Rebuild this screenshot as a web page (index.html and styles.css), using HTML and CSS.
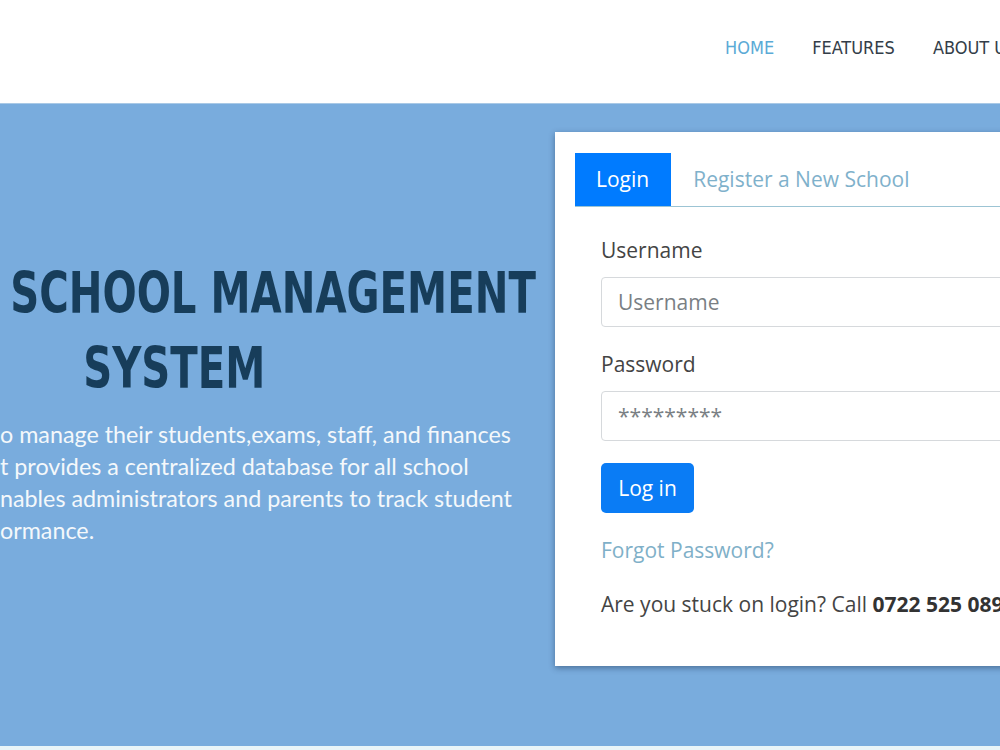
FILE: index.html
```html
<!DOCTYPE html>
<html lang="en">
<head>
<meta charset="utf-8">
<title>School Management System</title>
<link rel="stylesheet" href="styles.css">
</head>
<body>
<header class="topbar">
  <nav class="nav">
    <a class="nav-link active" href="#">HOME</a>
    <a class="nav-link" href="#">FEATURES</a>
    <a class="nav-link" href="#">ABOUT US</a>
  </nav>
</header>
<section class="hero">
  <div class="intro">
    <h1 class="title"><span class="t1">SCHOOL MANAGEMENT</span><span class="t2">SYSTEM</span></h1>
    <p class="lead">o manage their students,exams, staff, and finances<br>t provides a centralized database for all school<br>nables administrators and parents to track student<br>ormance.</p>
  </div>
  <div class="card">
    <div class="tabs">
      <a class="tab active" href="#">Login</a>
      <a class="tab" href="#">Register a New School</a>
    </div>
    <form class="form">
      <label class="label" for="u">Username</label>
      <input class="input" id="u" type="text" placeholder="Username">
      <label class="label" for="p">Password</label>
      <input class="input" id="p" type="text" placeholder="*********">
      <button class="btn" type="button">Log in</button>
      <a class="forgot" href="#">Forgot Password?</a>
      <p class="help">Are you stuck on login? Call <b>0722 525 089</b></p>
    </form>
  </div>
</section>
<div class="strip"></div>
</body>
</html>
```
FILE: styles.css
```css
html, body {
  margin: 0;
  padding: 0;
}
body {
  width: 1000px;
  height: 750px;
  overflow: hidden;
  font-family: "Open Sans", "Liberation Sans", sans-serif;
}
.topbar {
  height: 104px;
  background: #fff;
  border-bottom: 1px solid #a9c9e6;
  display: flex;
  align-items: center;
  padding-left: 725px;
  box-sizing: border-box;
}
.nav {
  display: flex;
  gap: 38px;
  white-space: nowrap;
  margin-top: -9px;
}
.nav-link {
  font-family: "DejaVu Sans Condensed", sans-serif;
  font-size: 18px;
  font-weight: 500;
  color: #333d48;
  text-decoration: none;
}
.nav-link.active {
  color: #5aaad6;
}
.hero {
  height: 642px;
  background: #79acdd;
  display: grid;
  grid-template-columns: 555px 1fr;
}
.intro {
  padding-top: 152px;
  min-width: 0;
}
.title {
  margin: 0;
  font-family: "DejaVu Sans Condensed", sans-serif;
  font-weight: bold;
  font-size: 57px;
  line-height: 75px;
  color: #173d5a;
  white-space: nowrap;
  transform: scaleX(0.785);
  transform-origin: left center;
}
.title span {
  display: block;
}
.t1 {
  padding-left: 13px;
}
.t2 {
  padding-left: 106px;
}
.lead {
  margin: 12px 0 0;
  font-family: "Lato", "Liberation Sans", sans-serif;
  font-size: 23.3px;
  line-height: 32px;
  color: #f4f8fb;
  white-space: nowrap;
}
.card {
  margin-top: 28px;
  width: 520px;
  height: 534px;
  background: #fff;
  box-shadow: 0 2px 6px rgba(20, 40, 70, 0.45);
  padding: 21px 0 0 20px;
  box-sizing: border-box;
}
.tabs {
  display: flex;
  border-bottom: 1px solid #9cc4d4;
  height: 54px;
  box-sizing: border-box;
}
.tab {
  font-size: 21px;
  line-height: 53px;
  padding: 0 23px 0 22px;
  color: #7fb1cb;
  text-decoration: none;
}
.tab.active {
  background: #007bff;
  color: #fff;
  padding: 0 22px 0 21px;
}
.form {
  display: flex;
  flex-direction: column;
  align-items: flex-start;
  padding: 28px 0 0 26px;
}
.label {
  font-size: 21px;
  line-height: 30px;
  color: #444;
  margin-bottom: 12px;
}
.input {
  width: 480px;
  height: 50px;
  box-sizing: border-box;
  border: 1px solid #d6d9dc;
  border-radius: 4px;
  padding: 0 16px;
  font-family: "Open Sans", sans-serif;
  font-size: 21px;
  color: #495057;
  margin-bottom: 22px;
}
.input::placeholder {
  color: #7a7f84;
}
.btn {
  height: 50px;
  width: 93px;
  border: none;
  border-radius: 5px;
  background: #0a7cf5;
  color: #fff;
  font-family: "Open Sans", sans-serif;
  font-size: 21px;
  padding: 0;
  margin-bottom: 22px;
}
.forgot {
  font-size: 21px;
  line-height: 30px;
  color: #7fb0c8;
  text-decoration: none;
  margin-bottom: 24px;
}
.help {
  margin: 0;
  font-size: 21px;
  line-height: 30px;
  color: #444;
  white-space: nowrap;
}
.help b {
  color: #333;
}
.strip {
  height: 4px;
  background: #e9f5f8;
}
```
